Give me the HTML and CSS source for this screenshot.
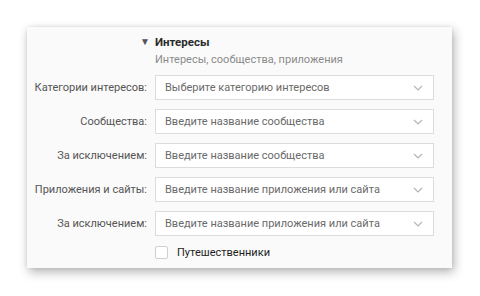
FILE: index.html
```html
<!DOCTYPE html>
<html>
<head>
<meta charset="utf-8">
<link rel="stylesheet" href="styles.css">
</head>
<body>
<div class="panel">
  <div class="head">
    <span class="tri">▼</span>
    <div class="titles">
      <div class="title">Интересы</div>
      <div class="sub">Интересы, сообщества, приложения</div>
    </div>
  </div>
  <div class="row"><div class="label">Категории интересов:</div><div class="select"><span>Выберите категорию интересов</span><svg class="chev" width="10" height="6" viewBox="0 0 10 6"><path d="M1 1l4 4 4-4" fill="none" stroke="#b5b5b5" stroke-width="1.2"/></svg></div></div>
  <div class="row"><div class="label">Сообщества:</div><div class="select"><span>Введите название сообщества</span><svg class="chev" width="10" height="6" viewBox="0 0 10 6"><path d="M1 1l4 4 4-4" fill="none" stroke="#b5b5b5" stroke-width="1.2"/></svg></div></div>
  <div class="row"><div class="label">За исключением:</div><div class="select"><span>Введите название сообщества</span><svg class="chev" width="10" height="6" viewBox="0 0 10 6"><path d="M1 1l4 4 4-4" fill="none" stroke="#b5b5b5" stroke-width="1.2"/></svg></div></div>
  <div class="row"><div class="label">Приложения и сайты:</div><div class="select"><span>Введите название приложения или сайта</span><svg class="chev" width="10" height="6" viewBox="0 0 10 6"><path d="M1 1l4 4 4-4" fill="none" stroke="#b5b5b5" stroke-width="1.2"/></svg></div></div>
  <div class="row"><div class="label">За исключением:</div><div class="select"><span>Введите название приложения или сайта</span><svg class="chev" width="10" height="6" viewBox="0 0 10 6"><path d="M1 1l4 4 4-4" fill="none" stroke="#b5b5b5" stroke-width="1.2"/></svg></div></div>
  <div class="row check"><div class="label"></div><div class="box"></div><div class="clabel">Путешественники</div></div>
</div>
</body>
</html>
```
FILE: styles.css
```css
html, body { margin: 0; padding: 0; background: #fff; }
body { width: 480px; height: 296px; overflow: hidden; font-family: Roboto, "Liberation Sans", sans-serif; font-size: 11px; }
.panel {
  margin: 27px 0 0 27px;
  width: 425px;
  height: 241px;
  box-sizing: border-box;
  background: #fafafa;
  box-shadow: 2px 4px 10px rgba(0,0,0,0.3), 0 0 4px rgba(0,0,0,0.08);
  padding-top: 8px;
}
.head { display: flex; }
.tri { width: 128px; text-align: right; padding-right: 5px; box-sizing: border-box; font-size: 10px; color: #555; line-height: 14px; }
.title { font-weight: bold; color: #2a2a2a; font-size: 11.5px; line-height: 14px; }
.sub { color: #8a8a8a; line-height: 14px; margin-top: 4px; }
.row { display: flex; align-items: center; margin-top: 9px; }
.head + .row { margin-top: 8px; }
.label { width: 120px; text-align: right; color: #555; padding-right: 8px; }
.select {
  width: 279px; height: 25px; box-sizing: border-box;
  border: 1px solid #dcdcdc; background: #fff;
  display: flex; align-items: center; justify-content: space-between;
  padding: 0 10px 0 9px; color: #6a6a6a;
}
.chev { display: block; }
.check { margin-top: 10px; }
.box { width: 13px; height: 13px; box-sizing: border-box; border: 1px solid #cfcfcf; background: #fff; border-radius: 2px; }
.clabel { margin-left: 9px; color: #1e1e1e; }
```
